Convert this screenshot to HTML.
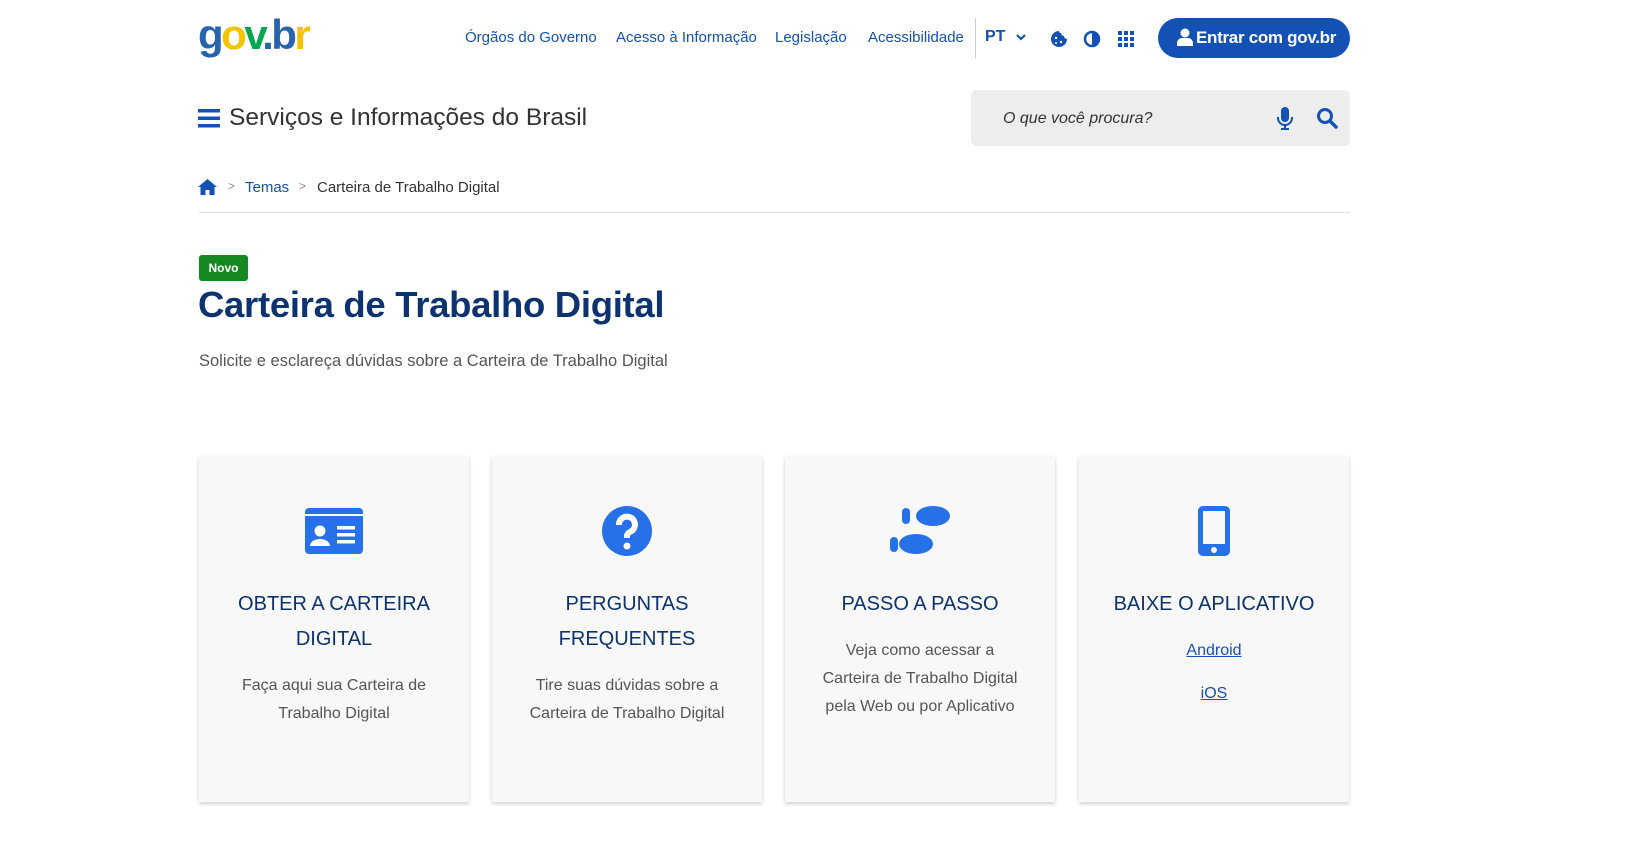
<!DOCTYPE html>
<html><head><meta charset="utf-8"><style>
*{margin:0;padding:0;box-sizing:border-box}
body{width:1634px;height:856px;background:#fff;font-family:"Liberation Sans",sans-serif;position:relative;overflow:hidden;color:#333}
.a{position:absolute;white-space:nowrap}
.nav{top:29px;font-size:15px;color:#1351b4}
.card{position:absolute;top:456px;width:270px;height:346px;background:#f8f8f8;box-shadow:0 2px 4px rgba(0,0,0,.18);text-align:center}
.card svg{position:absolute;left:50%;transform:translateX(-50%);top:50px}
.ct{position:absolute;top:131px;left:0;right:0;font-size:20px;line-height:35px;color:#0c326f}
.cd{font-size:16px;line-height:28px;color:#555}
</style></head><body>
<div class="a" style="left:198px;top:12px;font-size:42px;font-weight:bold;letter-spacing:-2.5px;line-height:46px"><span style="color:#2864ae">g</span><span style="color:#f5c400">o</span><span style="color:#00a650">v</span><span style="color:#2864ae">.</span><span style="color:#2864ae">b</span><span style="color:#f5c400">r</span></div>
<div class="a nav" style="left:465px">Órgãos do Governo</div>
<div class="a nav" style="left:616px">Acesso à Informação</div>
<div class="a nav" style="left:775px">Legislação</div>
<div class="a nav" style="left:868px">Acessibilidade</div>
<div class="a" style="left:975px;top:18px;width:1px;height:40px;background:#ccc"></div>
<div class="a" style="left:985px;top:28px;font-size:16px;font-weight:bold;color:#1351b4">PT</div>
<svg class="a" style="left:1015px;top:33px" width="12" height="8" viewBox="0 0 12 8"><path d="M2 2l4 4 4-4" stroke="#1351b4" stroke-width="2.2" fill="none"/></svg>
<svg class="a" style="left:1050px;top:30px" width="18" height="18" viewBox="0 0 18 18"><path d="M9 1a8 8 0 1 0 8 8 3 3 0 0 1-3-3 3 3 0 0 1-3-3 2 2 0 0 1-2-2z" fill="#1351b4"/><circle cx="6" cy="8" r="1.2" fill="#fff"/><circle cx="11" cy="12" r="1.2" fill="#fff"/><circle cx="6" cy="13" r="1" fill="#fff"/></svg>
<svg class="a" style="left:1083px;top:30px" width="18" height="18" viewBox="0 0 18 18"><circle cx="9" cy="9" r="7" stroke="#1351b4" stroke-width="2.5" fill="#fff"/><path d="M9 2a7 7 0 0 1 0 14z" fill="#1351b4"/></svg>
<svg class="a" style="left:1118px;top:31px" width="16" height="16" viewBox="0 0 16 16" fill="#1351b4"><rect x="0" y="0" width="4" height="4"/><rect x="6" y="0" width="4" height="4"/><rect x="12" y="0" width="4" height="4"/><rect x="0" y="6" width="4" height="4"/><rect x="6" y="6" width="4" height="4"/><rect x="12" y="6" width="4" height="4"/><rect x="0" y="12" width="4" height="4"/><rect x="6" y="12" width="4" height="4"/><rect x="12" y="12" width="4" height="4"/></svg>
<div class="a" style="left:1158px;top:18px;width:192px;height:40px;border-radius:20px;background:#1351b4;color:#fff;font-size:17px;font-weight:bold;line-height:40px;padding-left:38px;letter-spacing:-.3px">Entrar com gov.br</div>
<svg class="a" style="left:1177px;top:28px" width="16" height="18" viewBox="0 0 16 18" fill="#fff"><circle cx="8" cy="5" r="4.5"/><path d="M0 18v-3a5 5 0 0 1 5-5h6a5 5 0 0 1 5 5v3z"/></svg>
<svg class="a" style="left:198px;top:108px" width="22" height="20" viewBox="0 0 22 20" fill="#1351b4"><rect y="1" width="22" height="3.5"/><rect y="8.5" width="22" height="3.5"/><rect y="16" width="22" height="3.5"/></svg>
<div class="a" style="left:229px;top:104px;font-size:24.5px;color:#333">Serviços e Informações do Brasil</div>
<div class="a" style="left:971px;top:90px;width:379px;height:56px;background:#ededed;border-radius:6px"></div>
<div class="a" style="left:1003px;top:110px;font-size:16px;font-style:italic;color:#333">O que você procura?</div>
<svg class="a" style="left:1277px;top:107px" width="16" height="24" viewBox="0 0 16 24" fill="#1351b4"><rect x="4" y="0" width="8" height="15" rx="4"/><path d="M1 10v1a7 7 0 0 0 14 0v-1" stroke="#1351b4" stroke-width="2" fill="none"/><rect x="7" y="18" width="2" height="4"/><rect x="4" y="21" width="8" height="2"/></svg>
<svg class="a" style="left:1316px;top:107px" width="22" height="22" viewBox="0 0 22 22"><circle cx="9" cy="9" r="6.5" stroke="#1351b4" stroke-width="3" fill="none"/><path d="M14 14l6 6" stroke="#1351b4" stroke-width="3.5" stroke-linecap="round"/></svg>
<svg class="a" style="left:198px;top:179px" width="19" height="16" viewBox="0 0 19 16" fill="#1351b4"><path d="M9.5 0L0 8h2.5v8h5v-5h4v5h5V8H19z"/></svg>
<div class="a" style="left:228px;top:179px;font-size:12px;color:#888">&gt;</div>
<div class="a" style="left:245px;top:179px;font-size:15px;color:#1351b4">Temas</div>
<div class="a" style="left:299px;top:179px;font-size:12px;color:#888">&gt;</div>
<div class="a" style="left:317px;top:179px;font-size:15px;color:#333">Carteira de Trabalho Digital</div>
<div class="a" style="left:199px;top:212px;width:1151px;height:1px;background:#e0e0e0"></div>
<div class="a" style="left:199px;top:255px;width:49px;height:26px;background:#168821;border-radius:3px;color:#fff;font-size:12px;font-weight:bold;line-height:26px;text-align:center">Novo</div>
<div class="a" style="left:198px;top:284px;font-size:36.5px;font-weight:bold;color:#0c326f;letter-spacing:-.3px">Carteira de Trabalho Digital</div>
<div class="a" style="left:199px;top:352px;font-size:16.5px;color:#555">Solicite e esclareça dúvidas sobre a Carteira de Trabalho Digital</div>

<div class="card" style="left:199px">
<svg width="58" height="46" viewBox="0 0 58 46" style="top:52px"><rect width="58" height="46" rx="4" fill="#2670e8"/><rect y="6" width="58" height="2" fill="#f8f8f8"/><circle cx="15" cy="23" r="5.5" fill="#fff"/><path d="M5 38a10 7 0 0 1 20 0z" fill="#fff"/><rect x="32" y="18" width="18" height="3.5" fill="#fff"/><rect x="32" y="25" width="18" height="3.5" fill="#fff"/><rect x="32" y="32" width="18" height="3.5" fill="#fff"/></svg>
<div class="ct">OBTER A CARTEIRA<br>DIGITAL</div>
<div class="cd" style="position:absolute;top:216px;left:0;right:0">Faça aqui sua Carteira de<br>Trabalho Digital</div>
</div>
<div class="card" style="left:492px">
<svg width="50" height="50" viewBox="0 0 50 50" style="top:50px"><circle cx="25" cy="25" r="25" fill="#2670e8"/><path d="M17 19a8 8 0 1 1 11 7c-2 1-3 2-3 4v2" stroke="#fff" stroke-width="6" fill="none"/><circle cx="25" cy="40" r="3.5" fill="#fff"/></svg>
<div class="ct">PERGUNTAS<br>FREQUENTES</div>
<div class="cd" style="position:absolute;top:216px;left:0;right:0">Tire suas dúvidas sobre a<br>Carteira de Trabalho Digital</div>
</div>
<div class="card" style="left:785px">
<svg width="66" height="52" viewBox="0 0 66 52" style="top:49px"><ellipse cx="46" cy="11" rx="17" ry="10" fill="#2670e8"/><rect x="15" y="3" width="8" height="16" rx="4" fill="#2670e8"/><ellipse cx="29" cy="39" rx="17" ry="10" fill="#2670e8"/><rect x="3" y="32" width="8" height="15" rx="4" fill="#2670e8"/></svg>
<div class="ct">PASSO A PASSO</div>
<div class="cd" style="position:absolute;top:181px;left:0;right:0">Veja como acessar a<br>Carteira de Trabalho Digital<br>pela Web ou por Aplicativo</div>
</div>
<div class="card" style="left:1079px">
<svg width="32" height="50" viewBox="0 0 32 50" style="top:50px"><rect width="32" height="50" rx="5" fill="#2670e8"/><rect x="5" y="5" width="22" height="33" fill="#f8f8f8"/><circle cx="16" cy="44" r="3" fill="#f8f8f8"/></svg>
<div class="ct">BAIXE O APLICATIVO</div>
<div class="cd" style="position:absolute;top:173px;left:0;right:0;color:#1351b4;line-height:43px"><u>Android</u><br><u>iOS</u></div>
</div>
</body></html>
